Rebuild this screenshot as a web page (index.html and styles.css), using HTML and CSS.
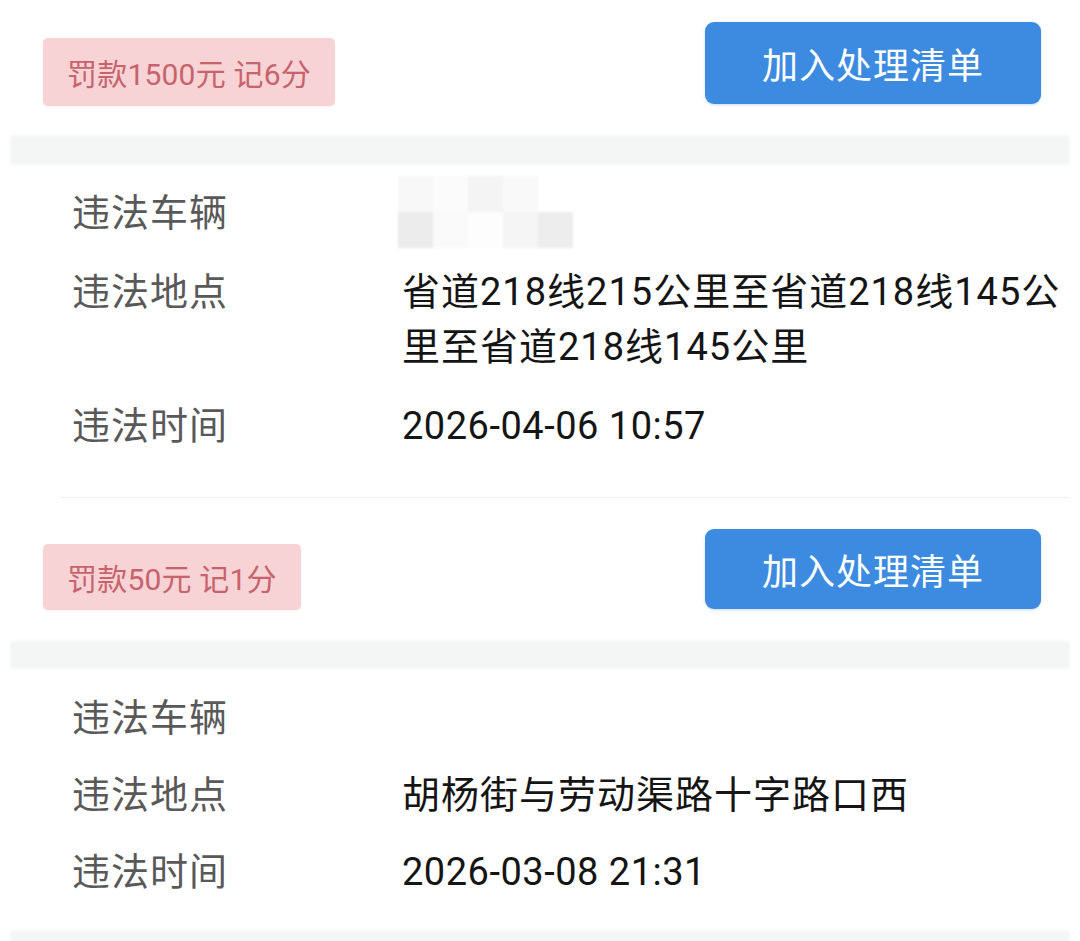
FILE: index.html
```html
<!DOCTYPE html>
<html lang="zh-CN">
<head>
<meta charset="utf-8">
<title>违法记录</title>
<link rel="stylesheet" href="styles.css">
</head>
<body>
<main class="list">
  <section class="card card-first">
    <div class="card-head">
      <span class="fine-badge">罚款1500元 记6分</span>
      <button class="add-btn" type="button">加入处理清单</button>
    </div>
    <div class="band"></div>
    <dl class="info">
      <div class="info-row">
        <dt class="info-label">违法车辆</dt>
        <dd class="info-value">
          <span class="mosaic" aria-hidden="true">
            <i class="m1"></i><i class="m2"></i><i class="m3"></i><i class="m4"></i><i class="m5"></i>
            <i class="m6"></i><i class="m7"></i><i class="m8"></i><i class="m9"></i><i class="m10"></i>
          </span>
        </dd>
      </div>
      <div class="info-row">
        <dt class="info-label">违法地点</dt>
        <dd class="info-value">省道218线215公里至省道218线145公里至省道218线145公里</dd>
      </div>
      <div class="info-row">
        <dt class="info-label">违法时间</dt>
        <dd class="info-value date">2026-04-06 10:57</dd>
      </div>
    </dl>
    <div class="sep"></div>
  </section>

  <section class="card card-second">
    <div class="card-head">
      <span class="fine-badge">罚款50元 记1分</span>
      <button class="add-btn" type="button">加入处理清单</button>
    </div>
    <div class="band"></div>
    <dl class="info">
      <div class="info-row">
        <dt class="info-label">违法车辆</dt>
        <dd class="info-value"></dd>
      </div>
      <div class="info-row">
        <dt class="info-label">违法地点</dt>
        <dd class="info-value">胡杨街与劳动渠路十字路口西</dd>
      </div>
      <div class="info-row">
        <dt class="info-label">违法时间</dt>
        <dd class="info-value date">2026-03-08 21:31</dd>
      </div>
    </dl>
    <div class="band band-bottom"></div>
  </section>
</main>
</body>
</html>
```

FILE: styles.css
```css
* {
  box-sizing: border-box;
}

html, body {
  margin: 0;
  padding: 0;
  background: #ffffff;
}

body {
  width: 1080px;
  height: 941px;
  overflow: hidden;
  font-family: "Roboto", "Noto Sans CJK SC", sans-serif;
  -webkit-font-smoothing: antialiased;
}

.list {
  display: flex;
  flex-direction: column;
}

.card {
  display: flex;
  flex-direction: column;
}

.card-first {
  padding-top: 22px;
}

.card-second {
  padding-top: 31px;
}

.card-head {
  display: flex;
  justify-content: space-between;
  align-items: flex-start;
  padding: 0 39px 0 43px;
}

.fine-badge {
  margin-top: 16px;
  height: 68px;
  display: flex;
  align-items: center;
  padding: 0 24px;
  background: #f7d3d5;
  color: #c7636c;
  font-size: 30px;
  letter-spacing: 0.2px;
  border-radius: 5px;
  box-shadow: 0 1px 2px rgba(200, 120, 120, 0.12);
  white-space: nowrap;
}

.card-second .fine-badge {
  margin-top: 15px;
  height: 66px;
}

.add-btn {
  width: 336px;
  height: 82px;
  border: none;
  border-radius: 9px;
  background: #3c8be1;
  color: #ffffff;
  font-family: "Roboto", "Noto Sans CJK SC", sans-serif;
  font-size: 36px;
  letter-spacing: 1px;
  padding: 0;
  box-shadow: 0 1px 3px rgba(40, 110, 200, 0.25);
}

.card-second .add-btn {
  height: 80px;
}

.band {
  margin: 29px 10px 0;
  height: 30px;
  background: #f4f6f6;
  border-radius: 3px;
  filter: blur(1.5px);
}

.card-second .band {
  margin-top: 31px;
  height: 28px;
}

.card-second .band-bottom {
  margin: 30px 10px 0;
  height: 20px;
}

.info {
  margin: 21px 0 0;
  padding: 0;
  display: flex;
  flex-direction: column;
  gap: 24px;
}

.card-second .info {
  margin-top: 22px;
  gap: 22px;
}

.info-row {
  display: grid;
  grid-template-columns: 330px 1fr;
  padding: 0 12px 0 72px;
  font-size: 38px;
  line-height: 55px;
}

.info-label {
  margin: 0;
  color: #595959;
  letter-spacing: 1px;
}

.info-value {
  margin: 0;
  color: #151515;
  letter-spacing: 1px;
  min-height: 55px;
}

.info-value.date {
  letter-spacing: 0.5px;
}

.mosaic {
  display: grid;
  grid-template-columns: repeat(5, 35px);
  grid-template-rows: repeat(2, 36px);
  margin: -10px 0 -16px -4px;
  filter: blur(1px);
}

.mosaic i {
  display: block;
}

.m1 { background: #f8f8f8; }
.m2 { background: #fbfbfb; }
.m3 { background: #f4f4f4; }
.m4 { background: #f9f9f9; }
.m5 { background: #ffffff; }
.m6 { background: #ececec; }
.m7 { background: #fafafa; }
.m8 { background: #fdfdfd; }
.m9 { background: #f5f5f5; }
.m10 { background: #ededed; }

.sep {
  margin: 43px 10px 0 60px;
  height: 1px;
  background: #f0f0f0;
}
```
